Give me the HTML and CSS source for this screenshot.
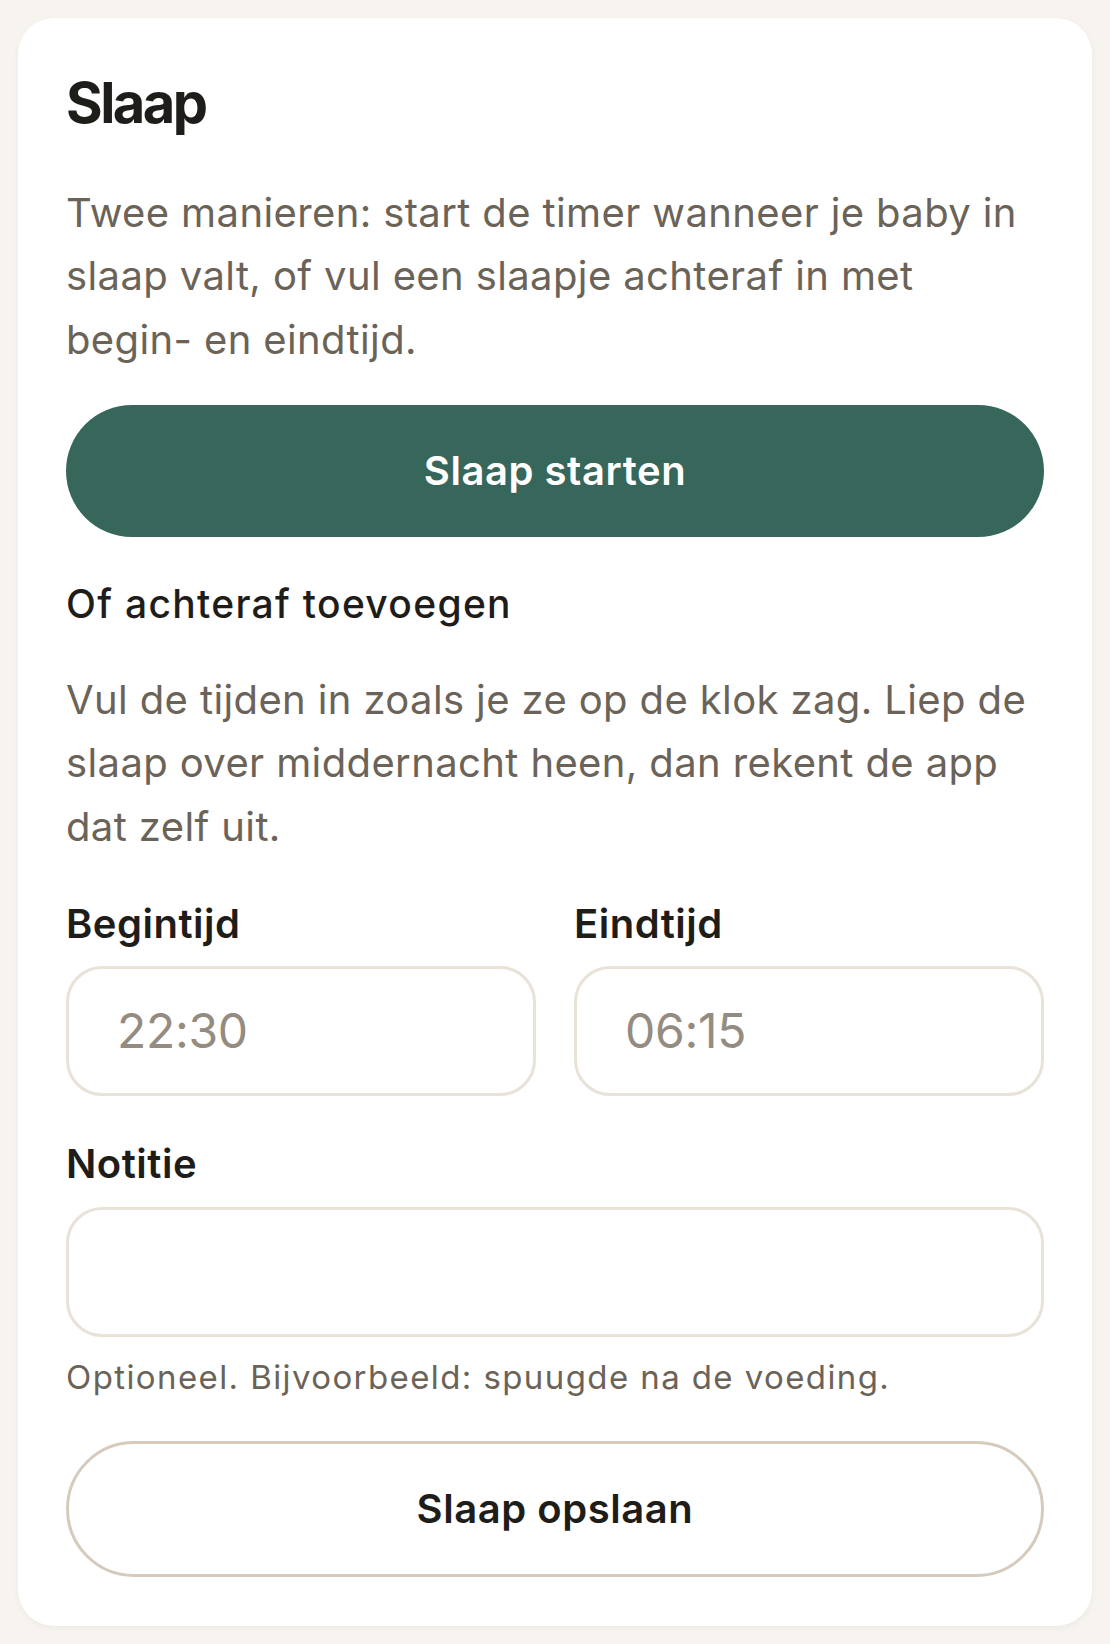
FILE: index.html
```html
<!DOCTYPE html>
<html lang="nl">
<head>
<meta charset="utf-8">
<title>Slaap</title>
<link rel="stylesheet" href="styles.css">
</head>
<body>
<main class="card">
  <h2 class="title">Slaap</h2>
  <p class="text intro">Twee manieren: start de timer wanneer je baby in slaap valt, of vul een slaapje achteraf in met begin- en eindtijd.</p>
  <button class="btn btn-primary" type="button">Slaap starten</button>
  <h3 class="subtitle">Of achteraf toevoegen</h3>
  <p class="text explain">Vul de tijden in zoals je ze op de klok zag. Liep de slaap over middernacht heen, dan rekent de app dat zelf uit.</p>
  <div class="times">
    <div class="field">
      <label class="label" for="begin">Begintijd</label>
      <input class="input time" id="begin" type="text" value="22:30">
    </div>
    <div class="field">
      <label class="label" for="eind">Eindtijd</label>
      <input class="input time" id="eind" type="text" value="06:15">
    </div>
  </div>
  <div class="field note">
    <label class="label" for="notitie">Notitie</label>
    <input class="input" id="notitie" type="text">
  </div>
  <p class="hint">Optioneel. Bijvoorbeeld: spuugde na de voeding.</p>
  <button class="btn btn-secondary" type="button">Slaap opslaan</button>
</main>
</body>
</html>
```
FILE: styles.css
```css
* {
  box-sizing: border-box;
}

html, body {
  margin: 0;
  padding: 0;
}

body {
  background: #f7f4ef;
  padding: 18px;
  font-family: Inter, "Noto Sans", "Liberation Sans", sans-serif;
  color: #1f1d1a;
}

.card {
  background: #ffffff;
  border-radius: 36px;
  padding: 48px 48px 49px;
  box-shadow: 0 2px 6px rgba(60, 45, 20, 0.05);
  display: flex;
  flex-direction: column;
}

.title {
  margin: 0 0 40px;
  font-size: 56px;
  line-height: 75px;
  font-weight: 700;
  letter-spacing: -2.5px;
  color: #1f1d1a;
}

.text {
  margin: 0;
  font-size: 40px;
  line-height: 63.33px;
  letter-spacing: 0.38px;
  color: #6b6358;
}

.btn {
  display: flex;
  align-items: center;
  justify-content: center;
  width: 100%;
  border-radius: 999px;
  font-family: inherit;
  font-size: 40px;
  font-weight: 600;
  letter-spacing: 0.55px;
  cursor: pointer;
}

.btn-primary {
  margin-top: 34px;
  height: 132px;
  background: #37665a;
  border: 0;
  color: #ffffff;
}

.subtitle {
  margin: 42px 0 0;
  font-size: 39px;
  line-height: 49px;
  font-weight: 500;
  letter-spacing: 1.3px;
  color: #1f1d1a;
}

.explain {
  margin-top: 40px;
}

.times {
  display: grid;
  grid-template-columns: 1fr 1fr;
  column-gap: 38px;
  margin-top: 42px;
}

.field {
  display: flex;
  flex-direction: column;
  gap: 18px;
}

.label {
  font-size: 40px;
  line-height: 48px;
  font-weight: 600;
  letter-spacing: 0.5px;
  color: #1f1d1a;
}

.input {
  height: 130px;
  width: 100%;
  border: 3px solid #e8e2d8;
  border-radius: 36px;
  padding: 0 48px;
  font-family: inherit;
  font-size: 48px;
  letter-spacing: -0.3px;
  color: #958c81;
  background: #ffffff;
  outline: none;
}

.note {
  margin-top: 44px;
  gap: 19px;
}

.hint {
  margin: 16px 0 0;
  font-size: 33px;
  line-height: 48px;
  letter-spacing: 1.4px;
  color: #6b6358;
}

.btn-secondary {
  margin-top: 40px;
  height: 136px;
  background: #ffffff;
  border: 3px solid #d5cbbd;
  color: #1f1d1a;
}
```
